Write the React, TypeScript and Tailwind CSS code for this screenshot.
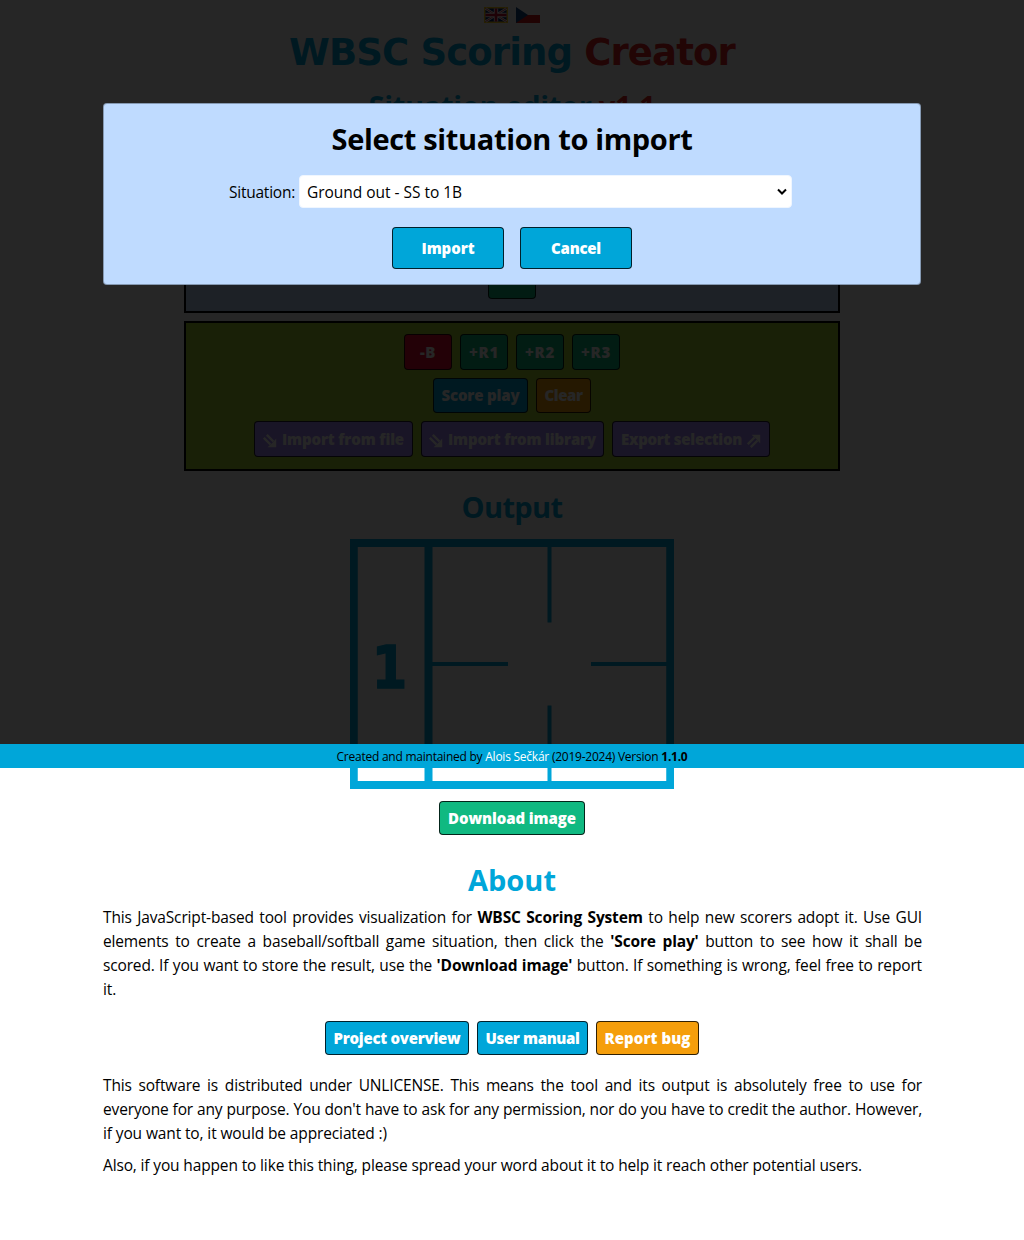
import React from "react";

const UI = "font-['Open_Sans','Noto_Sans',sans-serif]";

type BtnProps = { className: string; label: string; text: number; children?: React.ReactNode; after?: React.ReactNode };

/* Text stretched or squeezed to an exact advance width. */
function Fit({ children, width, className = "" }: { children: React.ReactNode; width: number; className?: string }) {
  const ref = React.useRef<HTMLSpanElement>(null);
  const [spacing, setSpacing] = React.useState(0);
  React.useLayoutEffect(() => {
    const el = ref.current;
    if (!el) return;
    const n = (el.textContent || "").length;
    if (n > 0) setSpacing((width - el.getBoundingClientRect().width) / n);
  }, [width]);
  return (
    <span ref={ref} className={"inline-block whitespace-nowrap " + className} style={{ letterSpacing: spacing + "px" }}>
      {children}
    </span>
  );
}

function Btn({ className, label, text, children, after }: BtnProps) {
  return (
    <button className={"flex shrink-0 items-center justify-center rounded border border-black/80 pb-px text-[15px] font-extrabold text-white " + className}>
      {children}
      <Fit width={text}>{label}</Fit>
      {after}
    </button>
  );
}

function ArrowDown() {
  return (
    <svg width="14" height="14" viewBox="0 0 14 14" className="mr-[5px] mt-1" fill="none" stroke="currentColor" strokeWidth="2.4">
      <path d="M0.8 3.8 7.5 10.5M3.8 0.8 10.5 7.5" />
      <path d="M13.2 4.5V13.2H4.5L7.4 10.7 10.7 7.4Z" fill="currentColor" stroke="none" />
    </svg>
  );
}

function ArrowUp() {
  return (
    <svg width="14" height="14" viewBox="0 0 14 14" className="ml-[5px] mt-1" fill="none" stroke="currentColor" strokeWidth="2.4">
      <path d="M0.8 10.2 7.5 3.5M3.8 13.2 10.5 6.5" />
      <path d="M13.2 9.5V0.8H4.5L7.4 3.3 10.7 6.6Z" fill="currentColor" stroke="none" />
    </svg>
  );
}

function Flags() {
  return (
    <div className="flex h-4 justify-center gap-2">
      <svg width="24" height="16" viewBox="0 0 24 16">
        <rect width="24" height="16" fill="#facc15" />
        <rect x="1.5" y="1.5" width="21" height="13" fill="#012169" />
        <path d="M1.5 1.5 22.5 14.5M22.5 1.5 1.5 14.5" stroke="#fff" strokeWidth="2.6" />
        <path d="M1.5 1.5 22.5 14.5M22.5 1.5 1.5 14.5" stroke="#c8102e" strokeWidth="0.8" />
        <path d="M12 1.5V14.5M1.5 8H22.5" stroke="#fff" strokeWidth="4.4" />
        <path d="M12 1.5V14.5M1.5 8H22.5" stroke="#c8102e" strokeWidth="2.6" />
      </svg>
      <svg width="24" height="16" viewBox="0 0 24 16">
        <rect y="8" width="24" height="8" fill="#d7141a" />
        <path d="M0 0 12 8 0 16Z" fill="#11457e" />
      </svg>
    </div>
  );
}

function Scoresheet() {
  return (
    <svg width="324" height="250" viewBox="0 0 324 250" className="mx-auto block" stroke="#00a6d9">
      <rect x="3.75" y="4" width="316.5" height="242" fill="#fff" strokeWidth="8" />
      <path d="M78.5 4V246" strokeWidth="8" />
      <path d="M199.5 8V83.5M199.5 166.5V242M82 125H158M241 125H317" strokeWidth="4" />
      <text transform="translate(39.6 149) scale(0.88 1)" textAnchor="middle" fill="#00a6d9" strokeWidth="1.5" className="font-['DejaVu_Sans',sans-serif] text-[58px] font-bold">
        1
      </text>
    </svg>
  );
}

function Line({ children }: { children: React.ReactNode }) {
  return <span className="block whitespace-nowrap [text-align-last:justify]">{children}</span>;
}

function Heading({ children, width }: { children: React.ReactNode; width: number }) {
  return (
    <h2 className="h-9 text-center text-[29px] leading-[34px] font-bold text-[#00a6d9]">
      <Fit width={width}>{children}</Fit>
    </h2>
  );
}

function ImportDialog() {
  return (
    <div className="absolute inset-x-0 top-0 flex h-[744px] items-start justify-center bg-black/85 pt-[103px]">
      <div className="h-[182px] w-[818px] rounded border border-black/30 bg-[#bfdbff] pt-[17px] text-black">
        <h2 className="h-9 text-center text-[29px] leading-9 font-bold">
          <Fit width={361}>Select situation to import</Fit>
        </h2>
        <div className="mt-[18px] flex h-[33px] items-center pl-[125px]">
          <Fit width={66}>Situation:</Fit>
          <div className="ml-1 flex h-[33px] w-[493px] items-center justify-between rounded border border-blue-50 bg-white pr-1 pl-[7px]">
            <Fit width={155}>Ground out - SS to 1B</Fit>
            <svg width="10" height="8" viewBox="0 0 10 8" fill="none" stroke="#000" strokeWidth="2">
              <path d="M1 1.5 5 5.5 9 1.5" />
            </svg>
          </div>
        </div>
        <div className="mt-[19px] flex justify-center gap-4">
          <Btn className="h-[42px] w-28 bg-[#00a6d9]" label="Import" text={53} />
          <Btn className="h-[42px] w-28 bg-[#00a6d9]" label="Cancel" text={50} />
        </div>
      </div>
    </div>
  );
}

export default function App() {
  return (
    <div className={"relative h-[1240px] w-[1024px] overflow-hidden bg-white text-[15.5px] leading-6 text-black " + UI}>
      <div className="pt-[7px]">
        <Flags />
        <h1 className="mt-2.5 h-10 text-center font-['DejaVu_Sans',sans-serif] text-[37px] leading-10 font-bold text-[#00a6d9]">
          <Fit width={446}>
            WBSC Scoring <span className="text-[#e02424]">Creator</span>
          </Fit>
        </h1>
        <div className="mt-4">
          <Heading width={287}>
            Situation editor <span className="text-[#e02424]">v1.1</span>
          </Heading>
        </div>
        <section className="mx-auto mt-[7px] flex h-[181px] w-[656px] items-end justify-center border-2 border-black bg-[#bfdbfe] pb-3">
          <Btn className="h-9 w-12 bg-[#10b981]" label="+" text={10} />
        </section>
        <section className="mx-auto mt-2 flex h-[150px] w-[656px] flex-col gap-2 border-2 border-black bg-[#a9d533] pt-[11px]">
          <div className="flex justify-center gap-2">
            <Btn className="h-9 w-12 bg-[#e8082f]" label="-B" text={16} />
            <Btn className="h-9 w-12 bg-[#10b981]" label="+R1" text={30} />
            <Btn className="h-9 w-12 bg-[#10b981]" label="+R2" text={30} />
            <Btn className="h-9 w-12 bg-[#10b981]" label="+R3" text={30} />
          </div>
          <div className="flex justify-center gap-2">
            <Btn className="h-[35px] w-[95px] bg-[#00a6d9]" label="Score play" text={78} />
            <Btn className="h-[35px] w-[55px] bg-[#f59e0b]" label="Clear" text={38} />
          </div>
          <div className="flex justify-center gap-2">
            <Btn className="h-9 w-[159px] bg-[#a78bfa]" label="Import from file" text={122}><ArrowDown /></Btn>
            <Btn className="h-9 w-[183px] bg-[#a78bfa]" label="Import from library" text={148}><ArrowDown /></Btn>
            <Btn className="h-9 w-[158px] bg-[#a78bfa]" label="Export selection" text={121} after={<ArrowUp />} />
          </div>
        </section>
        <div className="mt-[19px] mb-[13px]">
          <Heading width={101}>Output</Heading>
        </div>
        <Scoresheet />
        <div className="mt-3 flex justify-center">
          <Btn className="h-[34px] w-[146px] bg-[#10b981]" label="Download image" text={128} />
        </div>
        <section className="mx-auto mt-7 w-[820px]">
          <Heading width={88}>About</Heading>
          <p className="mt-1.5 pl-px tracking-[-0.15px]">
            <Line>This JavaScript-based tool provides visualization for <b>WBSC Scoring System</b> to help new scorers adopt it. Use GUI</Line>
            <Line>elements to create a baseball/softball game situation, then click the <b>'Score play'</b> button to see how it shall be</Line>
            <Line>scored. If you want to store the result, use the <b>'Download image'</b> button. If something is wrong, feel free to report</Line>
            it.
          </p>
          <div className="mt-5 flex justify-center gap-2">
            <Btn className="h-[34px] w-36 bg-[#00a6d9]" label="Project overview" text={127} />
            <Btn className="h-[34px] w-[111px] bg-[#00a6d9]" label="User manual" text={94} />
            <Btn className="h-[34px] w-[103px] bg-[#f59e0b]" label="Report bug" text={86} />
          </div>
          <p className="mt-[18px] pl-px tracking-[-0.15px]">
            <Line>This software is distributed under UNLICENSE. This means the tool and its output is absolutely free to use for</Line>
            <Line>everyone for any purpose. You don't have to ask for any permission, nor do you have to credit the author. However,</Line>
            <Fit width={284} className="align-top">if you want to, it would be appreciated :)</Fit>
          </p>
          <p className="mt-2 pl-px">
            <Fit width={759} className="align-top">Also, if you happen to like this thing, please spread your word about it to help it reach other potential users.</Fit>
          </p>
        </section>
      </div>
      <ImportDialog />
      <footer className="absolute inset-x-0 top-[744px] h-6 bg-[#00a6d9] pt-px text-center text-xs leading-6">
        <Fit width={351} className="align-top">
          Created and maintained by <span className="text-white">Alois Sečkár</span> (2019-2024) Version <b>1.1.0</b>
        </Fit>
      </footer>
    </div>
  );
}
